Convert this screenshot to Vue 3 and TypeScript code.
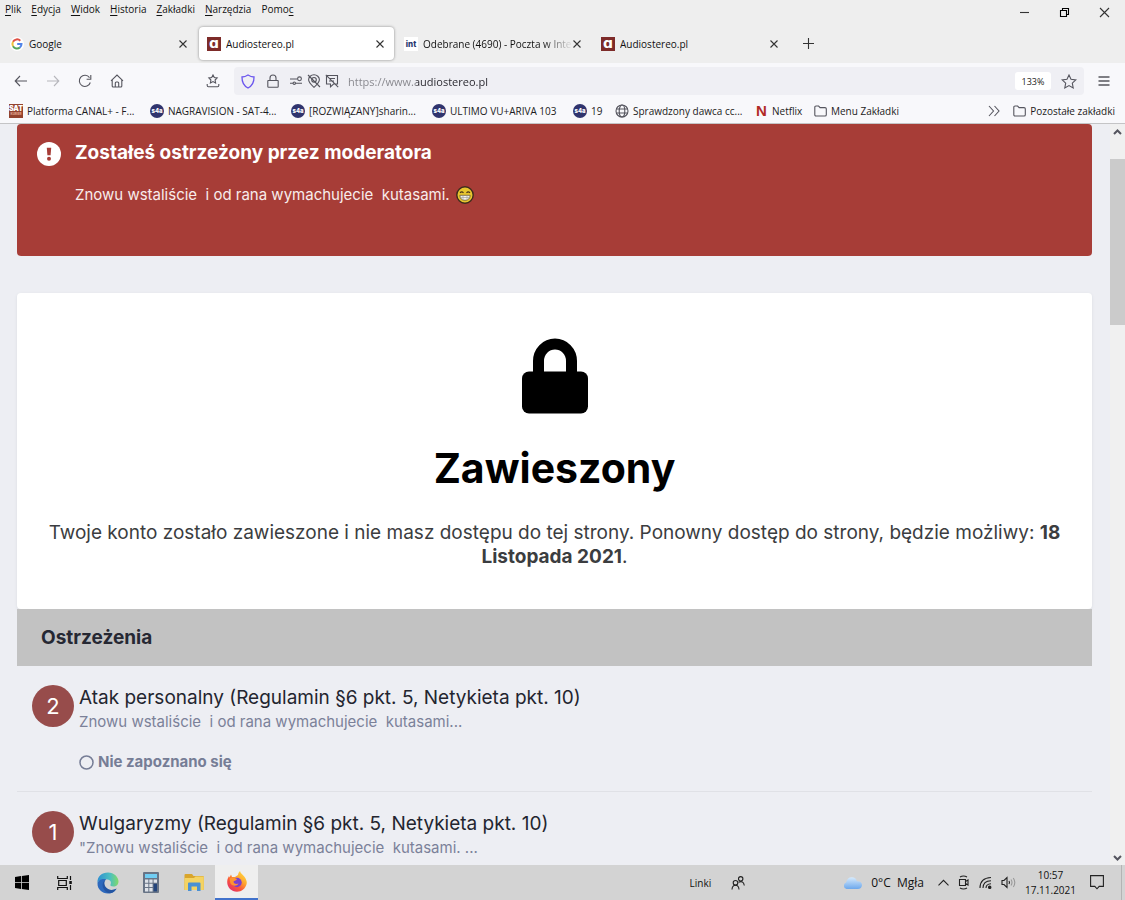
<script setup lang="ts">
import { ref } from 'vue'

interface Tab { title: string; icon: 'google' | 'audio' | 'int'; fade?: boolean }
interface Bookmark { title: string; icon: 'sat' | 's4a' | 'globe' | 'netflix' | 'folder'; size: 'wide' | 'mid' | 'small' | 'auto' }
interface Warning { points: number; title: string; note: string; status?: string }

const menu: { pre: string; key: string; post: string }[] = [
  { pre: '', key: 'P', post: 'lik' },
  { pre: '', key: 'E', post: 'dycja' },
  { pre: '', key: 'W', post: 'idok' },
  { pre: '', key: 'H', post: 'istoria' },
  { pre: '', key: 'Z', post: 'akładki' },
  { pre: '', key: 'N', post: 'arzędzia' },
  { pre: 'Pomo', key: 'c', post: '' },
]

const tabs: Tab[] = [
  { title: 'Google', icon: 'google' },
  { title: 'Audiostereo.pl', icon: 'audio' },
  { title: 'Odebrane (4690) - Poczta w Inte', icon: 'int', fade: true },
  { title: 'Audiostereo.pl', icon: 'audio' },
]
const activeTab = ref(1)
const address = ref('https://www.audiostereo.pl')

const bookmarks: Bookmark[] = [
  { title: 'Platforma CANAL+ - F...', icon: 'sat', size: 'wide' },
  { title: 'NAGRAVISION - SAT-4...', icon: 's4a', size: 'wide' },
  { title: '[ROZWIĄZANY]sharin...', icon: 's4a', size: 'wide' },
  { title: 'ULTIMO VU+ARIVA 103', icon: 's4a', size: 'wide' },
  { title: '19', icon: 's4a', size: 'small' },
  { title: 'Sprawdzony dawca cc...', icon: 'globe', size: 'wide' },
  { title: 'Netflix', icon: 'netflix', size: 'mid' },
  { title: 'Menu Zakładki', icon: 'folder', size: 'auto' },
]

const warnings: Warning[] = [
  { points: 2, title: 'Atak personalny (Regulamin §6 pkt. 5, Netykieta pkt. 10)', note: 'Znowu wstaliście  i od rana wymachujecie  kutasami...', status: 'Nie zapoznano się' },
  { points: 1, title: 'Wulgaryzmy (Regulamin §6 pkt. 5, Netykieta pkt. 10)', note: '"Znowu wstaliście  i od rana wymachujecie  kutasami. ...' },
]
</script>

<template>
  <div class="screen">
    <header class="chrome">
      <div class="titlebar">
        <nav class="menu" aria-label="Menu">
          <button v-for="m in menu" :key="m.key">{{ m.pre }}<u>{{ m.key }}</u>{{ m.post }}</button>
        </nav>
        <div class="window-buttons">
          <button aria-label="Minimalizuj"><svg width="11" height="11" viewBox="0 0 11 11"><path d="M1 5.5h9" /></svg></button>
          <button aria-label="Przywróć"><svg class="dark" width="11" height="11" viewBox="0 0 11 11"><path d="M1.5 3.5h6v6h-6zM3.5 3.500v-2h6v6h-2" /></svg></button>
          <button aria-label="Zamknij"><svg width="11" height="11" viewBox="0 0 11 11"><path d="M1 1l9 9M10 1l-9 9" /></svg></button>
        </div>
      </div>

      <div class="tabs">
        <div v-for="(t, i) in tabs" :key="i" class="tab" :class="{ active: i === activeTab }">
          <button class="tab-main" @click="activeTab = i">
            <svg v-if="t.icon === 'google'" class="google" width="14" height="14" viewBox="0 0 14 14">
              <circle cx="7" cy="7" r="7" />
              <path d="M10.300 3.700A4.600 4.600 0 0 0 3 4.800" stroke="#df5145" />
              <path d="M3 4.800a4.600 4.600 0 0 0 0 4.400" stroke="#efc03c" />
              <path d="M3 9.200a4.600 4.600 0 0 0 6.900 1.300" stroke="#55a45b" />
              <path d="M9.900 10.500A4.600 4.600 0 0 0 11.500 7H7.200" stroke="#5184e8" />
            </svg>
            <span v-else-if="t.icon === 'audio'" class="fav audio">ɑ</span>
            <span v-else class="fav int">int</span>
            <span class="tab-title" :class="{ fade: t.fade }">{{ t.title }}</span>
          </button>
          <button class="tab-close" aria-label="Zamknij kartę"><svg width="8" height="8" viewBox="0 0 8 8"><path d="M.5.5l7 7M7.500.5l-7 7" /></svg></button>
        </div>
        <button class="new-tab" aria-label="Nowa karta"><svg width="11" height="11" viewBox="0 0 11 11"><path d="M5.500 0v11M0 5.500h11" /></svg></button>
      </div>

      <div class="navbar">
        <div class="nav-left">
          <button aria-label="Wstecz"><svg width="14" height="14" viewBox="0 0 14 14"><path d="M13 7H1.500M6 2L1.200 7 6 12" /></svg></button>
          <button aria-label="Dalej" class="dim"><svg width="14" height="14" viewBox="0 0 14 14"><path d="M1 7h11.500M8 2l4.800 5L8 12" /></svg></button>
          <button aria-label="Odśwież"><svg width="14" height="14" viewBox="0 0 14 14"><path d="M12.300 8.500A5.600 5.600 0 1 1 11.500 3.600M12.800 1v4.200H8.600" /></svg></button>
          <button aria-label="Strona startowa"><svg width="14" height="14" viewBox="0 0 14 14"><path d="M1 6.800L7 1l6 5.800M2.200 6v6q0 1 1 1h7.600q1 0 1-1V6M5.300 13V9q0-1 1-1h1.400q1 0 1 1v4" /></svg></button>
        </div>
        <button class="save" aria-label="Zapisane"><svg width="14" height="14" viewBox="0 0 14 14"><path d="M7 1l1.300 2.600 2.800.4-2 2 .5 2.900L7 7.500 4.400 8.900 4.900 6l-2-2 2.800-.4zM1.200 10v1.600q0 1.200 1.200 1.200h9.200q1.200 0 1.200-1.200V10" /></svg></button>
        <div class="urlbar">
          <svg class="shield" width="14" height="15" viewBox="0 0 14 15"><path d="M7 1q3 2 6 2 .2 7.800-6 11Q.8 10.800 1 3q3 0 6-2z" /></svg>
          <svg class="lock-small" width="12" height="14" viewBox="0 0 12 14"><path d="M1.200 6.500h9.600q.4 0 .4.500v5.500q0 .7-.7.7h-9q-.7 0-.7-.7V7q0-.5.4-.5zM3 6.500V4a3 3 0 0 1 6 0v2.500" /></svg>
          <div class="permissions">
            <svg width="14" height="14" viewBox="0 0 14 14"><path d="M1 5h7.500M6.500 9.200H13M1 9.200h3" /><circle cx="10.500" cy="4.800" r="1.900" /><circle cx="5.300" cy="9.200" r="1.200" /></svg>
            <svg width="14" height="14" viewBox="0 0 14 14"><path d="M7 13.300Q1.600 8.500 1.600 5.800a5.400 5 0 0 1 10.800 0Q12.400 8.500 7 13.300zM1 1l12 12" /><circle cx="7" cy="5.800" r="2.300" /></svg>
            <svg width="14" height="14" viewBox="0 0 14 14"><path d="M2 1.500h10.500v8.500H8.500l-3 2.800V10H1.500V2M4.500 4.500h5.500M4 7h5M.8.800l12.400 12.400" /></svg>
          </div>
          <input v-model="address" class="address" type="text" aria-label="Adres" spellcheck="false" />
          <button class="zoom">133%</button>
          <button class="star" aria-label="Dodaj zakładkę"><svg width="16" height="15" viewBox="0 0 16 15"><path d="M8 1l2 4.300 4.800.6-3.500 3.300.9 4.700L8 11.600l-4.200 2.300.9-4.700L1.200 5.900 6 5.300z" /></svg></button>
        </div>
        <button class="burger" aria-label="Menu"><svg width="12" height="12" viewBox="0 0 12 12"><path d="M.5 2h11M.5 6h11M.5 10h11" /></svg></button>
      </div>

      <div class="bookmarks">
        <a v-for="(b, i) in bookmarks" :key="i" href="#" :class="['bookmark', b.size]">
          <span v-if="b.icon === 'sat'" class="fav sat"><b>SAT</b><i>KURIER</i></span>
          <span v-else-if="b.icon === 's4a'" class="fav s4a">s4a</span>
          <svg v-else-if="b.icon === 'globe'" width="14" height="14" viewBox="0 0 14 14"><circle cx="7" cy="7" r="6" /><ellipse cx="7" cy="7" rx="2.800" ry="6" /><path d="M1.500 5h11M1.500 9h11" /></svg>
          <span v-else-if="b.icon === 'netflix'" class="netflix">N</span>
          <svg v-else width="13" height="14" viewBox="0 0 13 14"><path d="M.8 3.200q0-1.200 1.200-1.200h2.600l1.500 1.600H11q1.300 0 1.300 1.200v5.900q0 1.300-1.300 1.300H2q-1.200 0-1.200-1.300z" /></svg>
          <span>{{ b.title }}</span>
        </a>
        <button class="more" aria-label="Więcej zakładek"><svg width="12" height="12" viewBox="0 0 12 12"><path d="M1 1l4.500 5L1 11M6.500 1L11 6l-4.500 5" /></svg></button>
        <a href="#" class="bookmark">
          <svg width="13" height="14" viewBox="0 0 13 14"><path d="M.8 3.200q0-1.200 1.200-1.200h2.600l1.500 1.600H11q1.300 0 1.300 1.200v5.900q0 1.300-1.300 1.300H2q-1.200 0-1.200-1.300z" /></svg>
          <span>Pozostałe zakładki</span>
        </a>
      </div>
    </header>

    <div class="viewport">
      <main class="page">
        <section class="alert">
          <svg class="alert-icon" width="24" height="24" viewBox="0 0 24 24"><circle cx="12" cy="12" r="12" fill="#fff" /><path d="M9.800 5.800h4.400l-.6 7.500h-3.200z" fill="#a73d37" /><circle cx="12" cy="16.800" r="2" fill="#a73d37" /></svg>
          <div>
            <h2>Zostałeś ostrzeżony przez moderatora</h2>
            <p>Znowu wstaliście&nbsp; i od rana wymachujecie&nbsp; kutasami.
              <svg width="18" height="18" viewBox="0 0 18 18" role="img" aria-label="uśmiech"><circle cx="9" cy="9" r="8.200" fill="#e8c62e" stroke="#3d2b1d" stroke-width="1.400" /><path d="M4 6.800q1.700-2 3.500 0M10.500 6.800q1.700-2 3.500 0" fill="none" stroke="#4a3519" stroke-width="1.200" /><path d="M3.800 9.300h10.400q-.3 5-5.200 5t-5.200-5z" fill="#f3f3ee" stroke="#6b5a35" stroke-width=".8" /><path d="M4.200 11.500h9.600M7 9.500v4.300M11 9.500v4.300" stroke="#9a9a90" stroke-width=".6" /></svg>
            </p>
          </div>
        </section>

        <section class="suspended">
          <svg width="66" height="76" viewBox="0 0 66 76"><path d="M16.500 36V23a16.500 17 0 0 1 33 0v13" fill="none" stroke="#000" stroke-width="11" /><rect y="33.500" width="66" height="42" rx="7" /></svg>
          <h1>Zawieszony</h1>
          <p>Twoje konto zostało zawieszone i nie masz dostępu do tej strony. Ponowny dostęp do strony, będzie możliwy: <strong>18 Listopada 2021</strong>.</p>
        </section>

        <h2 class="section-title">Ostrzeżenia</h2>
        <ul class="warnings">
          <li v-for="w in warnings" :key="w.points">
            <span class="points">{{ w.points }}</span>
            <div>
              <h3><a href="#">{{ w.title }}</a></h3>
              <p class="note">{{ w.note }}</p>
              <p v-if="w.status" class="status"><svg width="15" height="15" viewBox="0 0 15 15"><circle cx="7.500" cy="7.500" r="6.500" /></svg>{{ w.status }}</p>
            </div>
          </li>
        </ul>
      </main>
      <div class="scrollbar">
        <button aria-label="W górę"><svg width="9" height="6" viewBox="0 0 9 6"><path d="M1 5l3.500-3.500L8 5" /></svg></button>
        <div class="track"><div class="thumb"></div></div>
        <button aria-label="W dół"><svg width="9" height="6" viewBox="0 0 9 6"><path d="M1 1l3.500 3.500L8 1" /></svg></button>
      </div>
    </div>

    <footer class="taskbar">
      <div class="apps">
        <button aria-label="Start"><svg width="14" height="15" viewBox="0 0 14 15"><path d="M0 2l6-1v6.200H0zM6.800.9L14 0v7.200H6.800zM0 8h6v6l-6-.9zM6.800 8H14v7l-7.200-.9z" fill="#000" /></svg></button>
        <button aria-label="Widok zadań"><svg width="16" height="14" viewBox="0 0 16 14"><path d="M.7 0v2.500h9.600V0M.7 14v-2.500h9.600V14M1.700 4.500h7.600v5H1.700zM13.500 0v4M13.500 9v5" fill="none" stroke="#111" stroke-width="1.200" /><path d="M12.300 5h2.500v3h-2.500z" fill="#111" /></svg></button>
        <button aria-label="Edge">
          <svg width="22" height="22" viewBox="0 0 22 22">
            <defs><linearGradient id="edge-top" x1="0" x2="1"><stop offset="0" stop-color="#2d8fd2" /><stop offset=".6" stop-color="#4bbfc0" /><stop offset="1" stop-color="#82da68" /></linearGradient></defs>
            <path d="M.5 11C0 4.500 5 .5 11 .5S21.500 5 21.500 9.500c0 3-2.200 5-5 5-2.500 0-3.500-1-3-2 1.500-3-1-5-4-5.200C5 7 1.800 8 .5 11z" fill="url(#edge-top)" />
            <path d="M.5 11.500C1 8 5 6 9.500 7.300 7 8.500 6.500 12 8.500 15c2.500 3.500 7 4 11 1.700C17.500 20 14.500 21.500 11 21.500 5 21.500.3 17 .5 11.500z" fill="#2d69bd" />
            <path d="M9.300 7.400C5.500 9 4.500 13.500 7 17.500c1.500 2.500 4 3.700 6 3.800 3-.5 5-2 6.600-4.700-4 2.300-8.500 1.600-11-1.700C6.500 12 7 8.500 9.300 7.400z" fill="#2455a2" />
          </svg>
        </button>
        <button aria-label="Kalkulator"><svg width="16" height="21" viewBox="0 0 16 21"><rect width="16" height="21" rx="1" fill="#687486" /><rect x="2" y="2" width="12" height="4" fill="#70cdf3" /><path d="M2 7.500h3.300v3.300H2zM6.300 7.500h3.300v3.300H6.300zM10.600 7.500H14v3.300h-3.400zM2 11.800h3.300v3.300H2zM6.300 11.800h3.300v3.300H6.300zM2 16.100h3.300v3.300H2zM6.300 16.100h3.300v3.300H6.300z" fill="#dfe3e9" /><path d="M10.600 11.800H14v7.600h-3.400z" fill="#24457c" /></svg></button>
        <button aria-label="Eksplorator plików"><svg width="20" height="17" viewBox="0 0 20 17"><path d="M.5 1q0-1 1-1H8l1.500 2H19q.8 0 .8.8V16H.5z" fill="#d9a52c" /><path d="M.5 4H10l1.500-1.500h8.300V16H.5z" fill="#f4d363" /><path d="M4 17V9.500q0-1 1-1h10.500q1 0 1 1V17h-3.500v-4.500H7.500V17z" fill="#4b91d3" /></svg></button>
        <button aria-label="Firefox" class="running">
          <svg width="20" height="21" viewBox="0 0 20 21">
            <defs><linearGradient id="fox" x1="1" y1="0" x2=".2" y2="1"><stop offset="0" stop-color="#ffe94d" /><stop offset=".4" stop-color="#ffab2e" /><stop offset=".7" stop-color="#fb5539" /><stop offset="1" stop-color="#e02f6e" /></linearGradient></defs>
            <path d="M13 0c.3 2.500 2.500 3 4.200 5.500C20 9 20 12 19.600 13c-1 4.500-5 7.700-9.600 7.700C4.500 20.700.2 16.500.2 11c0-3 1-4.500 1.800-6l.5 1.500L4 3.500 5 6h3l3-2q.2-2.500 2-4z" fill="url(#fox)" />
            <circle cx="10" cy="11.500" r="4.700" fill="#7a40cf" />
            <path d="M2.500 7.500c3-2 5-1 7.500.5-1 2.200-3.500 1.500-3.500 3 .5 2 3 2.500 5 1.500-1.500 3-6.500 3-8.200-.5z" fill="#ff9330" />
          </svg>
        </button>
      </div>
      <div class="links">
        <span>Linki</span>
        <svg width="14" height="14" viewBox="0 0 14 14"><circle cx="4.500" cy="6.800" r="2.300" /><path d="M1 13.500q.2-4.300 3.500-4.300T8 13.500" /><circle cx="9.700" cy="2.800" r="2.200" /><path d="M7.500 6.200q5-2 5.800 3.300" /></svg>
      </div>
      <div class="tray">
        <svg class="cloud" width="19" height="12" viewBox="0 0 19 12"><defs><linearGradient id="cloud" x2="0" y2="1"><stop offset="0" stop-color="#d6eafc" /><stop offset="1" stop-color="#6da8ec" /></linearGradient></defs><path d="M3.500 12a3.400 3.400 0 0 1-.4-6.500Q4.500 0 9 .3q4 .2 4.800 4 5-.4 5.200 3.800-.3 3.900-4.300 3.900z" fill="url(#cloud)" /></svg>
        <span class="weather">0°C&nbsp; Mgła</span>
        <button aria-label="Ukryte ikony"><svg width="11" height="7" viewBox="0 0 11 7"><path d="M.5 6.300l5-5 5 5" /></svg></button>
        <svg width="12" height="15" viewBox="0 0 12 15"><path d="M1.500 4.500h6v6h-6zM7.500 6.500l2.500-1.500v5L7.500 8.500M2 2q3.500-2 7 0M2 13q3.500 2 7 0" /></svg>
        <svg class="wifi" width="13" height="13" viewBox="0 0 13 13"><path d="M1 12Q1 2 12 1.500M4 12q0-7 8-7.300M7 12q0-4 5-4.300" /><circle cx="10.700" cy="11.300" r="1.200" fill="#222" /></svg>
        <svg width="15" height="13" viewBox="0 0 15 13"><path d="M1 4.500h2l3-3v10l-3-3H1zM8 5q1 1.500 0 3" /><path class="faint" d="M10 3.500q2 3 0 6M12.300 2q3 4.500 0 9" /></svg>
        <div class="clock"><span>10:57</span><span>17.11.2021</span></div>
        <button aria-label="Powiadomienia"><svg width="14" height="15" viewBox="0 0 14 15"><path d="M.6.6h12.800v10.800H9.200L7 13.800l-2.200-2.400H.6z" /></svg></button>
      </div>
    </footer>
  </div>
</template>

<style>
body { margin: 0; overflow: hidden; }
</style>

<style scoped>
* { box-sizing: border-box; }
.screen { height: 100vh; display: flex; flex-direction: column; font-family: "Open Sans", "Noto Sans", sans-serif; font-size: 10px; color: #1c1b22; background: #edeef3; }
button { appearance: none; border: 0; padding: 0; margin: 0; background: none; font: inherit; color: inherit; display: flex; align-items: center; justify-content: center; }
a { color: inherit; text-decoration: none; }
h1, h2, h3, p, ul { margin: 0; padding: 0; }
svg { flex: none; }

.chrome { flex: none; background: #f8f8fb; border-bottom: 1px solid #c4c4c6; }
.chrome svg, .scrollbar svg { fill: none; stroke: #55555e; stroke-width: 1.1; }
.titlebar { display: flex; justify-content: space-between; height: 24px; padding-right: 1px; background: #eeeeee; }
.menu { display: flex; align-items: flex-start; gap: 10px; padding: 1px 5px; line-height: 16px; }
.menu button { display: block; color: #111; }
.menu u { text-underline-offset: 2px; }
.window-buttons { display: flex; }
.window-buttons button { width: 40px; height: 24px; }
.window-buttons svg { stroke: #333; }
.window-buttons .dark { stroke: #000; }

.tabs { display: flex; gap: 2px; height: 39px; padding: 3px 2px; background: #eeeeee; }
.tab { display: flex; align-items: center; flex: 0 1 195px; min-width: 0; height: 33px; padding: 0 10px 0 8px; border-radius: 4px; }
.tab.active { background: #fff; box-shadow: 0 0 3px #888; }
.tab-main { flex: 1; min-width: 0; justify-content: flex-start; gap: 5px; height: 33px; color: #111; }
.tab-title { flex: 1; min-width: 0; overflow: hidden; white-space: nowrap; text-align: left; }
.tab-title.fade { mask-image: linear-gradient(to right, #000 80%, transparent); }
.tab-close svg, .new-tab svg { stroke: #333; }
.new-tab { width: 36px; }
.google path { stroke-width: 2; }
.google circle { fill: #fff; stroke: none; }
.fav { flex: none; display: flex; align-items: center; justify-content: center; width: 14px; height: 14px; font-family: Inter, sans-serif; font-weight: 800; }
.audio { background: #7d2b29; color: #fff; font: bold 14px/10px "DejaVu Sans", sans-serif; padding-bottom: 2px; }
.int { background: #fff; color: #29376f; font-size: 8px; }

.navbar { display: flex; align-items: center; height: 36px; padding: 0 15px 0 14px; }
.nav-left { display: flex; flex: 0 0 192px; gap: 18px; }
.dim { opacity: .4; }
.save { margin-right: 14px; }
.urlbar { flex: 1; display: flex; align-items: center; min-width: 0; height: 28px; padding: 0 7px; border-radius: 4px; background: #efeff4; }
.shield { margin-right: 12px; }
.chrome .shield path { stroke: #6a55ee; stroke-width: 1.300; }
.permissions { display: flex; gap: 4px; margin: 0 9px 0 10px; }
.address { flex: 1; min-width: 0; height: 24px; border: 0; padding: 0; outline: 0; font: inherit; font-size: 11px; color: transparent; background: linear-gradient(to right, #85858b 68px, #25242b 68px); -webkit-background-clip: text; background-clip: text; }
.zoom { width: 36px; height: 18px; border-radius: 3px; background: #fff; margin-right: 10px; font-size: 9px; }
.burger { margin-left: 14px; }
.chrome .burger svg { stroke-width: 1.300; }

.bookmarks { display: flex; align-items: center; height: 24px; padding: 0 10px 0 9px; line-height: 16px; }
.bookmark { display: flex; align-items: center; gap: 4px; white-space: nowrap; }
.wide { width: 141px; }
.mid { width: 58px; }
.small { width: 42px; }
.s4a { border-radius: 50%; background: #30346e; color: #fff; font-size: 6px; }
.sat { flex-direction: column; background: #93432f; color: #fff; font-size: 7px; line-height: 7px; }
.sat i { font-style: normal; font-size: 3px; line-height: 5px; color: #e0a590; }
.netflix { width: 12px; font: 900 15px/14px "Liberation Sans Narrow", "Liberation Sans", sans-serif; color: #b12a24; }
.more { margin: 0 13px 0 auto; }

.viewport { flex: 1; min-height: 0; display: flex; overflow: hidden; font-family: Inter, sans-serif; }
.page { flex: 1; min-width: 0; padding: 0 18px 0 17px; overflow: hidden; }
.alert { display: flex; gap: 14px; min-height: 132px; padding: 18px 20px; border-radius: 4px; background: #a73d37; color: #fff; }
.alert-icon { flex: none; }
.alert h2 { font-size: 19px; line-height: 22px; font-weight: 700; }
.alert p { margin-top: 19px; font-size: 15px; line-height: 24px; color: #f8eceb; }
.alert p svg { vertical-align: -4px; margin-left: 2px; }
.suspended { margin-top: 37px; padding: 45px 28px 40px; border-radius: 4px; background: #fff; text-align: center; box-shadow: 0 1px 3px #d9dbe1; }
.suspended svg { display: block; margin: 0 auto; }
.suspended h1 { margin-top: 28px; font-size: 41px; line-height: 52px; font-weight: 700; color: #000; }
.suspended p { margin-top: 27px; font-size: 19px; line-height: 24px; color: #3b3d40; }
.section-title { padding: 17px 24px 16px; background: #c2c2c2; font-size: 19px; line-height: 24px; font-weight: 700; color: #262833; }
.warnings { list-style: none; }
.warnings li { display: flex; gap: 5px; height: 126px; padding: 19px 15px; border-bottom: 1px solid #e0e1e6; }
.points { display: flex; align-items: center; justify-content: center; width: 42px; height: 42px; border-radius: 50%; background: #974c4b; color: #fff; font-size: 22px; }
.warnings h3 { font-size: 19px; line-height: 26px; font-weight: 400; color: #23252f; }
.note { white-space: pre-wrap; font-size: 15px; line-height: 22px; color: #7b8199; }
.status { display: flex; align-items: center; gap: 4px; margin-top: 18px; font-size: 15px; line-height: 22px; font-weight: 700; color: #767d96; }
.status svg { fill: none; stroke: #767d96; stroke-width: 1.500; }

.scrollbar { flex: none; display: flex; flex-direction: column; width: 15px; background: #f0f0f0; }
.scrollbar button { width: 15px; height: 15px; }
.scrollbar svg { stroke-width: 2; }
.track { flex: 1; padding-top: 20px; }
.thumb { height: 24%; background: #cbcbcb; }

.taskbar { flex: none; display: flex; align-items: center; height: 35px; background: #d3d3d3; color: #111; }
.apps { display: flex; }
.apps button { width: 43px; height: 35px; }
.running { background: #efefef; border-bottom: 2px solid #4273cc; }
.links { display: flex; align-items: center; gap: 20px; margin: 0 98px 0 auto; }
.links svg, .tray svg { fill: none; stroke: #222; stroke-width: 1.1; }
.tray .cloud { stroke: none; }
.tray { display: flex; align-items: center; gap: 9px; height: 35px; padding-right: 17px; border-right: 1px solid #b4b4b4; margin-right: 3px; }
.weather { font-size: 12px; margin-right: 5px; }
.clock { display: flex; flex-direction: column; align-items: center; line-height: 15px; margin-right: 5px; }
.tray .faint { stroke: #999; }
</style>
